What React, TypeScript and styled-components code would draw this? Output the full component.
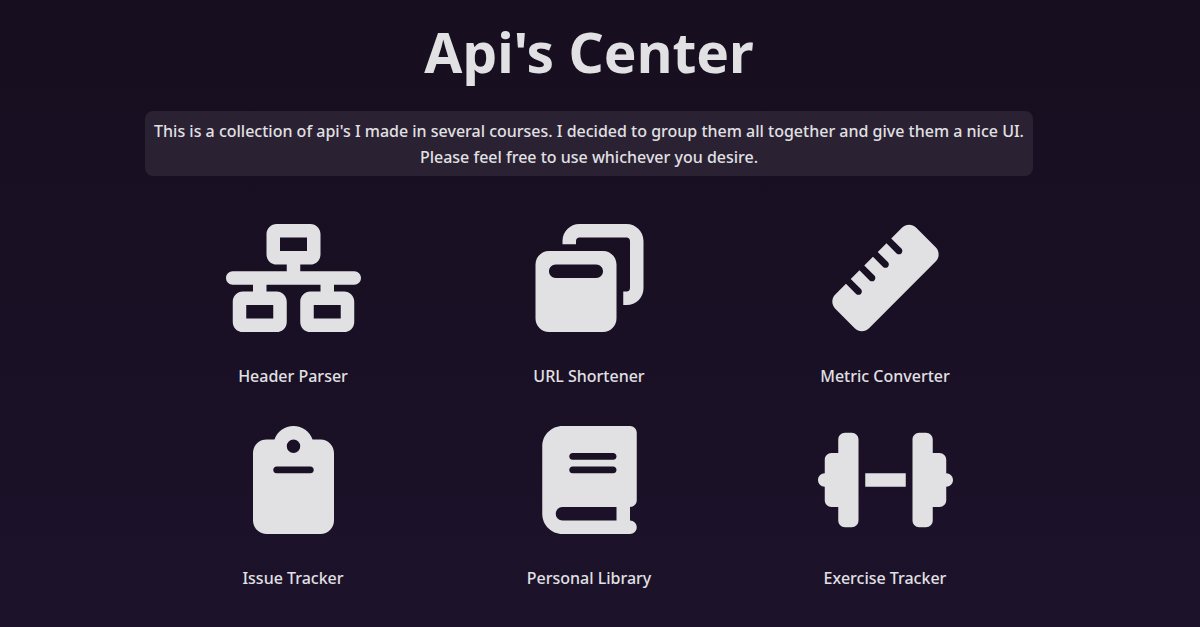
import React from "react";
import styled, { createGlobalStyle } from "styled-components";
import type { IconType } from "react-icons";
import {
  FaBook,
  FaClipboard,
  FaDumbbell,
  FaNetworkWired,
  FaRuler,
  FaWindowRestore,
} from "react-icons/fa6";

const GlobalStyle = createGlobalStyle`
  *, *::before, *::after {
    box-sizing: border-box;
  }

  html {
    min-height: 100%;
    background: linear-gradient(#170e1f, #1c122a);
  }

  body {
    margin: 0;
    color: #e1e0e3;
    font-family: "Segoe UI", "Noto Sans", sans-serif;
    font-size: 16px;
    font-weight: 500;
    line-height: 26px;
  }
`;

const Page = styled.main`
  display: flex;
  flex-direction: column;
  align-items: center;
  padding: 12px 22px 24px 0;
`;

const Title = styled.h1`
  margin: 0;
  font-size: 55px;
  font-weight: 700;
  line-height: 80px;
  text-align: center;
`;

const Intro = styled.p`
  width: 74vw;
  margin: 19px 0 0;
  padding: 7px 4px 6px;
  border-radius: 8px;
  background: #2a2133;
  text-align: center;
`;

const ApiGrid = styled.nav`
  display: grid;
  grid-template-columns: repeat(3, 1fr);
  row-gap: 37px;
  width: 74vw;
  margin-top: 48px;
`;

const ApiLink = styled.a`
  display: flex;
  flex-direction: column;
  align-items: center;
  gap: 31px;
  color: inherit;
  text-decoration: none;

  svg {
    width: 135px;
    height: 108px;
  }
`;

interface Api {
  name: string;
  path: string;
  Icon: IconType;
}

const apis: Api[] = [
  { name: "Header Parser", path: "#header-parser", Icon: FaNetworkWired },
  { name: "URL Shortener", path: "#url-shortener", Icon: FaWindowRestore },
  { name: "Metric Converter", path: "#metric-converter", Icon: FaRuler },
  { name: "Issue Tracker", path: "#issue-tracker", Icon: FaClipboard },
  { name: "Personal Library", path: "#personal-library", Icon: FaBook },
  { name: "Exercise Tracker", path: "#exercise-tracker", Icon: FaDumbbell },
];

export default function App() {
  return (
    <>
      <GlobalStyle />
      <Page>
        <Title>Api's Center</Title>
        <Intro>
          This is a collection of api's I made in several courses. I decided to
          group them all together and give them a nice UI.
          <br />
          Please feel free to use whichever you desire.
        </Intro>
        <ApiGrid>
          {apis.map(({ name, path, Icon }) => (
            <ApiLink key={name} href={path}>
              <Icon aria-hidden="true" />
              <span>{name}</span>
            </ApiLink>
          ))}
        </ApiGrid>
      </Page>
    </>
  );
}
